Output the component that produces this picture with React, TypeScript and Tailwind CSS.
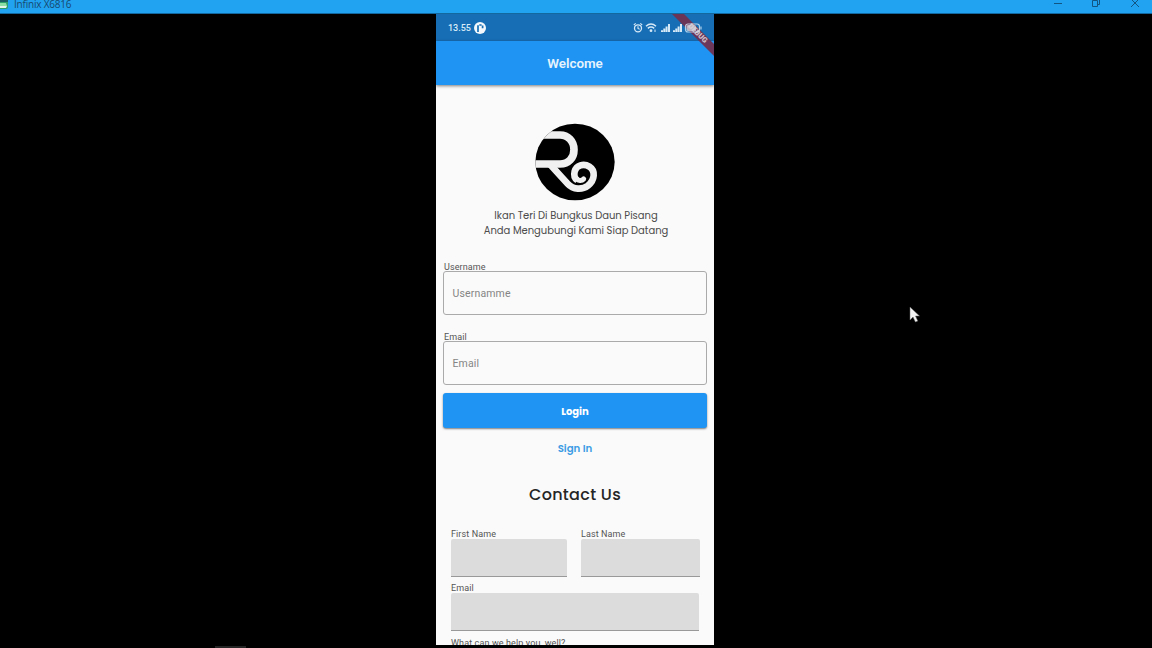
import React from "react";

const geometric = "font-['Poppins','Inter',sans-serif]";

function TitleBar() {
  return (
    <header className="relative flex h-[14px] shrink-0 items-start justify-between overflow-hidden border-b border-[#1468a0] bg-[#21a3f1]">
      <div className="flex items-start">
        <svg className="h-[9px] w-[9px]" viewBox="0 0 9 9">
          <path d="M0 0H8V7Q8 9 6 9H0Z" fill="#2e9e6a" />
          <path d="M0 0H8V2H0Z" fill="#1c5c62" />
          <path d="M0 3H6L7 6H0Z" fill="#8fe0a4" />
          <path d="M0 6H7L6 8H0Z" fill="#e4f5ea" />
        </svg>
        <span className="-mt-[2px] ml-[5px] font-['Open_Sans',sans-serif] text-[10px] leading-[13px] tracking-[-0.2px] whitespace-nowrap text-[#17496f]">
          Infinix X6816
        </span>
      </div>
      <svg className="h-[9px] w-[99px]" viewBox="0 0 99 9" fill="none" stroke="#125583" strokeWidth="1">
        <path d="M1 3.5H9" />
        <path d="M39.5 0.5H44.5V6.5H39.5ZM41 0V-1H46.5V4.5H45" />
        <path d="M78 -1L86 7M86 -1L78 7" />
      </svg>
    </header>
  );
}

function StatusBar() {
  return (
    <div className="flex h-[27px] shrink-0 items-center justify-between bg-[#176eb5] pr-[12px] pl-[12px]">
      <div className="flex items-center gap-[3px] text-[#d9ebf8]">
        <span className="text-[9px] leading-[12px] font-medium">13.55</span>
        <svg className="h-[12px] w-[12px]" viewBox="0 0 12 12">
          <circle cx="6" cy="6" r="6" fill="#f2f8fc" />
          <path d="M4 10V3.3M5.3 3H7.6M8.6 3.4V6.2" fill="none" stroke="#176eb5" strokeWidth="1.7" />
        </svg>
      </div>
      <svg className="relative z-30 h-[12px] w-[69px]" viewBox="0 0 69 12" fill="none" stroke="#d6e9f7">
        <circle cx="5" cy="6.3" r="3.5" strokeWidth="1.3" />
        <path d="M5 4.2V6.5L6.7 7.2M0.8 3L2.7 1.4M9.2 3L7.3 1.4" strokeWidth="1.1" />
        <path d="M13 4.2Q18 -0.2 23 4.2M14.8 6.4Q18 3.8 21.2 6.4" strokeWidth="1.5" />
        <circle cx="18" cy="8.7" r="1.4" fill="#d6e9f7" stroke="none" />
        <path d="M22 7.5V10" strokeWidth="1" />
        <path d="M29 10V8.2M31.3 10V6.5M33.6 10V4.5M36 10V2M41 10V8.2M43.3 10V6.5M45.6 10V4.5M48 10V2" strokeWidth="2" />
        <g opacity="0.8">
          <rect x="52.5" y="2" width="14" height="8" rx="2.5" strokeWidth="1.2" />
          <rect x="53.5" y="3" width="9.5" height="6" rx="1.5" fill="#d5d5dc" stroke="none" />
          <path d="M68 4.5V7.5" strokeWidth="1.2" />
        </g>
      </svg>
    </div>
  );
}

function DebugRibbon() {
  return (
    <svg className="absolute top-0 right-0 h-[44px] w-[46px]" viewBox="0 0 46 44">
      <path d="M4 0H16L46 30V42Z" fill="#72304f" opacity="0.92" />
      <text
        transform="translate(28.2 21) rotate(45)"
        textAnchor="middle"
        fontFamily="Roboto, sans-serif"
        fontSize="7.5"
        fontWeight="900"
        fill="#cdbfca"
      >
        DEBUG
      </text>
    </svg>
  );
}

function Logo() {
  return (
    <svg className="h-[78px] w-[80px]" viewBox="45 26 240 232">
      <defs>
        <clipPath id="disc">
          <ellipse cx="165" cy="142" rx="119" ry="115" />
        </clipPath>
      </defs>
      <ellipse cx="165" cy="142" rx="119" ry="115" fill="#000" />
      <g clipPath="url(#disc)" fill="none" stroke="#f0f0f0" strokeWidth="23">
        <path d="M60 61H120C144 61 162 80 162 105S146 148 120 148H40" />
        <path
          d="M91 150L143 207C160 226 187 226 204 213C225 196 227 168 208 156C191 145 169 152 164 170C161 182 165 192 172 197"
          strokeWidth="20"
        />
        <path d="M169 192C175 199 185 200 191 193" strokeWidth="15" strokeLinecap="round" />
      </g>
    </svg>
  );
}

function OutlinedField({ label, placeholder }: { label: string; placeholder: string }) {
  return (
    <div>
      <div className="h-[11px] pl-px text-[9px] leading-[14px] tracking-[0.1px] text-[#555]">{label}</div>
      <div className="flex h-[44px] items-center rounded-[3px] border border-[#aaa] px-[8.5px] pt-[1px] text-[10.5px] tracking-[0.15px] text-[#858585]">
        {placeholder}
      </div>
    </div>
  );
}

function FilledField({ label, className }: { label: string; className: string }) {
  return (
    <div className={className}>
      <div className="h-[11px] text-[9px] leading-[12px] tracking-[0.1px] whitespace-nowrap text-[#555]">{label}</div>
      <div className="h-[38px] rounded-t-[2px] border-b border-[#999] bg-[#dcdcdc]" />
    </div>
  );
}

export default function App() {
  return (
    <div className="relative flex h-[648px] w-[1152px] flex-col overflow-hidden bg-black font-['Roboto',sans-serif]">
      <TitleBar />
      <main className="relative mx-auto flex h-[631px] w-[278px] -translate-x-px flex-col overflow-hidden bg-[#fafafa]">
        <StatusBar />
        <div className="z-10 flex h-[44px] shrink-0 items-center justify-center bg-[#2094f2] pt-[2px] text-[13.4px] font-semibold text-[#e6f3fd] shadow-[0_1px_3px_rgba(0,0,0,0.5)]">
          Welcome
        </div>
        <div className="relative z-20 -mt-[71px] h-[71px] shrink-0">
          <DebugRibbon />
        </div>

        <div className="flex flex-col items-center pt-[38px]">
          <Logo />
          <p className={`${geometric} mt-[8px] pl-[2px] text-center text-[10px] leading-[14.5px] tracking-[-0.02px] whitespace-nowrap text-[#4c4c4c]`}>
            Ikan Teri Di Bungkus Daun Pisang
            <br />
            Anda Mengubungi Kami Siap Datang
          </p>
        </div>

        <form className="flex flex-col px-[7px] pt-[22px]">
          <OutlinedField label="Username" placeholder="Usernamme" />
          <div className="h-[15px]" />
          <OutlinedField label="Email" placeholder="Email" />
          <button
            type="button"
            className={`${geometric} mt-[8px] h-[35px] rounded-[3px] bg-[#2094f2] pt-[1px] text-[10px] font-bold text-white shadow-[0_1px_2px_rgba(0,0,0,0.5)]`}
          >
            Login
          </button>
          <a className={`${geometric} mt-[13px] text-center text-[10.2px] leading-[15px] font-semibold text-[#3c9ce4]`}>Sign In</a>
        </form>

        <h2 className={`${geometric} mt-[27px] text-center text-[16px] leading-[24px] font-medium tracking-[0.3px] text-[#252525]`}>
          Contact Us
        </h2>

        <div className="flex flex-col pt-[21px] pl-[15px]">
          <div className="flex gap-[14px]">
            <FilledField label="First Name" className="w-[116px]" />
            <FilledField label="Last Name" className="w-[119px]" />
          </div>
          <FilledField label="Email" className="mt-[5px] w-[248px]" />
          <div className="mt-[7px] text-[9px] leading-[11px] tracking-[0.12px] text-[#555]">What can we help you, well?</div>
        </div>
      </main>
      <div className="absolute bottom-0 left-[215px] h-[2px] w-[31px] bg-[#252525]" />
      <svg className="absolute top-[306px] left-[909px] h-[17px] w-[12px]" viewBox="0 0 12 17">
        <path d="M1 1V14L4 11L6.4 16L8.8 15L6.5 10H10.5Z" fill="#f4f4f4" stroke="#666" strokeWidth="0.5" />
      </svg>
    </div>
  );
}
